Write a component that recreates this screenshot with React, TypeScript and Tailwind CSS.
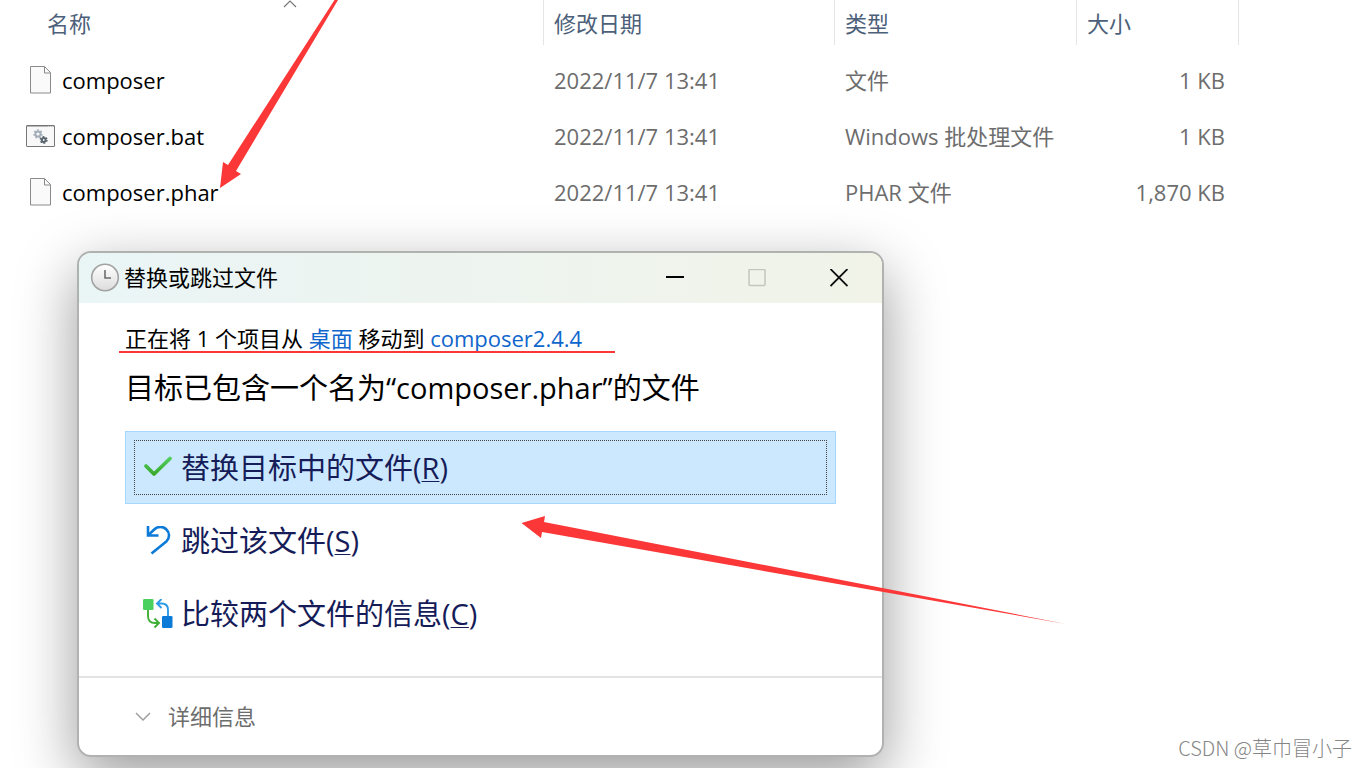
import React from 'react'

interface FileRow {
  name: string
  modified: string
  type: string
  size: string
  icon: 'file' | 'batch'
}

const files: FileRow[] = [
  { name: 'composer', modified: '2022/11/7 13:41', type: '文件', size: '1 KB', icon: 'file' },
  { name: 'composer.bat', modified: '2022/11/7 13:41', type: 'Windows 批处理文件', size: '1 KB', icon: 'batch' },
  { name: 'composer.phar', modified: '2022/11/7 13:41', type: 'PHAR 文件', size: '1,870 KB', icon: 'file' },
]

const columns = ['修改日期', '类型', '大小']

function FileIcon() {
  return (
    <svg width="21" height="28" viewBox="0 0 21 28" fill="none">
      <path d="M0.5 0.5h14l6 6v20.500h-20z" fill="#fafafa" stroke="#8a8a8a" />
      <path d="M14.5 0.5v6.500h6" stroke="#8a8a8a" />
    </svg>
  )
}

function Gear({ x, y, r, color }: { x: number; y: number; r: number; color: string }) {
  return (
    <g transform={`translate(${x} ${y})`} stroke={color}>
      <circle r={r} fill="none" strokeWidth="2" />
      <circle r={r + 1.4} fill="none" strokeWidth="1.4" strokeDasharray="1.8 1.7" />
    </g>
  )
}

function BatchIcon() {
  return (
    <svg width="29" height="22" viewBox="0 0 29 22">
      <rect x="0.5" y="0.5" width="28" height="21" rx="0.5" fill="#f8f8f8" stroke="#777" />
      <path d="M1 1h27" stroke="#777" />
      <path d="M22 1.5h5" stroke="#ddd" strokeDasharray="1 1" />
      <Gear x={12} y={9} r={2.6} color="#a3adb8" />
      <Gear x={17.7} y={15} r={1.9} color="#59636d" />
    </svg>
  )
}

function ClockIcon() {
  return (
    <svg width="30" height="30" viewBox="0 0 30 30" fill="none">
      <defs>
        <linearGradient id="clock" x1="0" y1="0" x2="0" y2="1">
          <stop offset="0" stopColor="#fff" />
          <stop offset="1" stopColor="#dcdcdc" />
        </linearGradient>
      </defs>
      <circle cx="15" cy="14.5" r="13.3" fill="url(#clock)" stroke="#a2a2a2" strokeWidth="1.6" />
      <path d="M15 7v8h6" stroke="#6c6c6c" strokeWidth="1.6" />
    </svg>
  )
}

function CheckIcon() {
  return (
    <svg width="30" height="30" viewBox="0 0 30 30" fill="none">
      <defs>
        <linearGradient id="check" gradientUnits="userSpaceOnUse" x1="0" y1="4" x2="0" y2="23">
          <stop offset="0" stopColor="#52d060" />
          <stop offset="1" stopColor="#36a526" />
        </linearGradient>
      </defs>
      <path d="M3 13l8 8L27 5.5" stroke="url(#check)" strokeWidth="3.8" strokeLinecap="round" strokeLinejoin="round" />
    </svg>
  )
}

function UndoIcon() {
  return (
    <svg width="30" height="30" viewBox="0 0 30 30" fill="none" stroke="#0c7bd8" strokeWidth="2.6">
      <path d="M5 0v9.5h10.5" />
      <path d="M5.500 9l5.700-5.500c3.400-3.400 8.600-3.400 12-.3 3.600 3.200 3.700 8.600.4 12L8.500 27.500" />
    </svg>
  )
}

function CompareIcon() {
  return (
    <svg width="30" height="30" viewBox="0 0 30 30" fill="none">
      <rect x="0" y="0" width="10.5" height="11" rx="1.2" fill="#4ad05e" />
      <rect x="19" y="17" width="10.5" height="12" rx="1.2" fill="#0c7bd8" />
      <path d="M5 11v6c0 4.5 2 7 7 7h3.5M11.500 19.500L16 24l-4.500 4.500" stroke="#3fae35" strokeWidth="1.9" />
      <path d="M25 17v-6c0-4-2.500-6.500-6.500-6.500h-4M18.500 0L14 4.500 18.500 9" stroke="#2b9be8" strokeWidth="1.9" />
    </svg>
  )
}

const options = [
  { label: '替换目标中的文件', accessKey: 'R', icon: <CheckIcon />, selected: true },
  { label: '跳过该文件', accessKey: 'S', icon: <UndoIcon />, selected: false },
  { label: '比较两个文件的信息', accessKey: 'C', icon: <CompareIcon />, selected: false },
]

function FileTable() {
  return (
    <table className="w-full table-fixed text-left text-[22px] leading-8 text-[#6d6d6d]">
      <colgroup>
        <col className="w-[544px]" />
        <col className="w-[291px]" />
        <col className="w-[242px]" />
        <col className="w-[162px]" />
        <col />
      </colgroup>
      <thead className="text-[#4c607a]">
        <tr className="h-[52px] align-top">
          <th className="relative p-0 font-normal">
            <div className="flex h-[45px] items-center border-r border-[#e5e5e5] pl-[47px]">名称</div>
            <svg className="absolute top-0 left-[283px]" width="14" height="8" viewBox="0 0 14 8" fill="none">
              <path d="M1 7l6-6 6 6" stroke="#777" strokeWidth="1.2" />
            </svg>
          </th>
          {columns.map((col) => (
            <th key={col} className="p-0 font-normal">
              <div className="flex h-[45px] items-center border-r border-[#e5e5e5] pl-2.5">{col}</div>
            </th>
          ))}
          <td />
        </tr>
      </thead>
      <tbody>
        {files.map((file) => (
          <tr key={file.name} className="h-14">
            <td className="p-0 pl-[26px] text-black">
              <div className="flex items-center gap-[7px]">
                <span className="flex w-[29px] justify-center">
                  {file.icon === 'file' ? <FileIcon /> : <BatchIcon />}
                </span>
                {file.name}
              </div>
            </td>
            <td className="p-0 pl-2.5">{file.modified}</td>
            <td className="p-0 pl-2.5">{file.type}</td>
            <td className="p-0 pr-3.5 text-right">{file.size}</td>
            <td />
          </tr>
        ))}
      </tbody>
    </table>
  )
}

function ReplaceDialog() {
  return (
    <section className="mt-[31px] ml-[77px] w-[807px] overflow-hidden rounded-[14px] border-2 border-[#b0b2b0] bg-white shadow-[0_20px_60px_rgba(0,0,0,0.4)]">
      <header className="flex h-[50px] items-center bg-linear-to-r from-[#eaf5f6] to-[#f1f3e8] pr-0.5 pl-[11px] text-[22px] leading-8 text-black">
        <ClockIcon />
        <h2 className="flex-1 pb-0.5 pl-1">替换或跳过文件</h2>
        <button aria-label="最小化" className="flex h-full w-[82px] items-center justify-center">
          <svg width="18" height="18" viewBox="0 0 18 18">
            <path d="M0 8h18" stroke="#000" strokeWidth="2" />
          </svg>
        </button>
        <button aria-label="最大化" disabled className="flex h-full w-[82px] items-center justify-center">
          <svg width="18" height="18" viewBox="0 0 18 18" fill="none">
            <rect x="1" y="0.5" width="16" height="16" rx="1" stroke="#c2c6bf" strokeWidth="1.5" />
          </svg>
        </button>
        <button aria-label="关闭" className="flex h-full w-[82px] items-center justify-center">
          <svg width="18" height="18" viewBox="0 0 18 18">
            <path d="M0.5 0l17 17M17.5 0l-17 17" stroke="#111" strokeWidth="1.8" />
          </svg>
        </button>
      </header>

      <div className="px-[46px] pt-[19px] pb-[26px] text-black">
        <p className="text-[22px] leading-8">
          正在将 1 个项目从 <a href="#desktop" className="text-[#0f66cc]">桌面</a> 移动到{' '}
          <a href="#composer" className="text-[#0f66cc]">composer2.4.4</a>
        </p>
        <h1 className="pt-3 pb-[21px] text-[29px] leading-11">目标已包含一个名为“composer.phar”的文件</h1>
        <div className="flex flex-col">
          {options.map((option) => (
            <button
              key={option.accessKey}
              className={
                option.selected
                  ? 'h-[73px] border border-[#a6d8ff] bg-[#cce8ff] p-2 text-left'
                  : 'h-[73px] border border-transparent p-2 text-left'
              }
            >
              <span
                className={
                  option.selected
                    ? 'flex h-full items-center gap-2 border border-dotted border-[#444] pl-2 text-[29px] leading-11 text-[#151c58]'
                    : 'flex h-full items-center gap-2 border border-transparent pl-2 text-[29px] leading-11 text-[#151c58]'
                }
              >
                {option.icon}
                <span>
                  {option.label}(<u className="decoration-1 underline-offset-2">{option.accessKey}</u>)
                </span>
              </span>
            </button>
          ))}
        </div>
      </div>

      <footer className="border-t-2 border-[#e3e3e3] px-[55px] pt-[22px] pb-[23px]">
        <button className="flex items-center gap-4 text-[22px] leading-8 text-[#6d6d6d]">
          <svg width="18" height="10" viewBox="0 0 18 10" fill="none">
            <path d="M2 2l7 7 7-7" stroke="#a0a0a0" strokeWidth="1.5" />
          </svg>
          详细信息
        </button>
      </footer>
    </section>
  )
}

// Hand-drawn marks over the windows: two arrows and an underline
function Marks() {
  return (
    <svg
      className="pointer-events-none absolute top-0 left-0"
      width="1080"
      height="640"
      viewBox="0 0 1080 640"
      fill="#fb3737"
    >
      <path d="M220 188l3-26 5 3L334.5 0h3.5L236 171l5 3z" />
      <path d="M521.5 523l23.5-7-1 6L1066 624 542 532l-1 6z" />
      <path d="M119 351h496v2H119z" />
    </svg>
  )
}

export default function App() {
  return (
    <main className="relative min-h-screen overflow-hidden bg-white font-['Open_Sans','Noto_Sans_CJK_SC',sans-serif]">
      <FileTable />
      <ReplaceDialog />
      <Marks />
      <p className="absolute right-3.5 bottom-1.5 font-['Noto_Sans_CJK_SC',sans-serif] text-xl font-light text-[#858585]">
        CSDN @草巾冒小子
      </p>
    </main>
  )
}
